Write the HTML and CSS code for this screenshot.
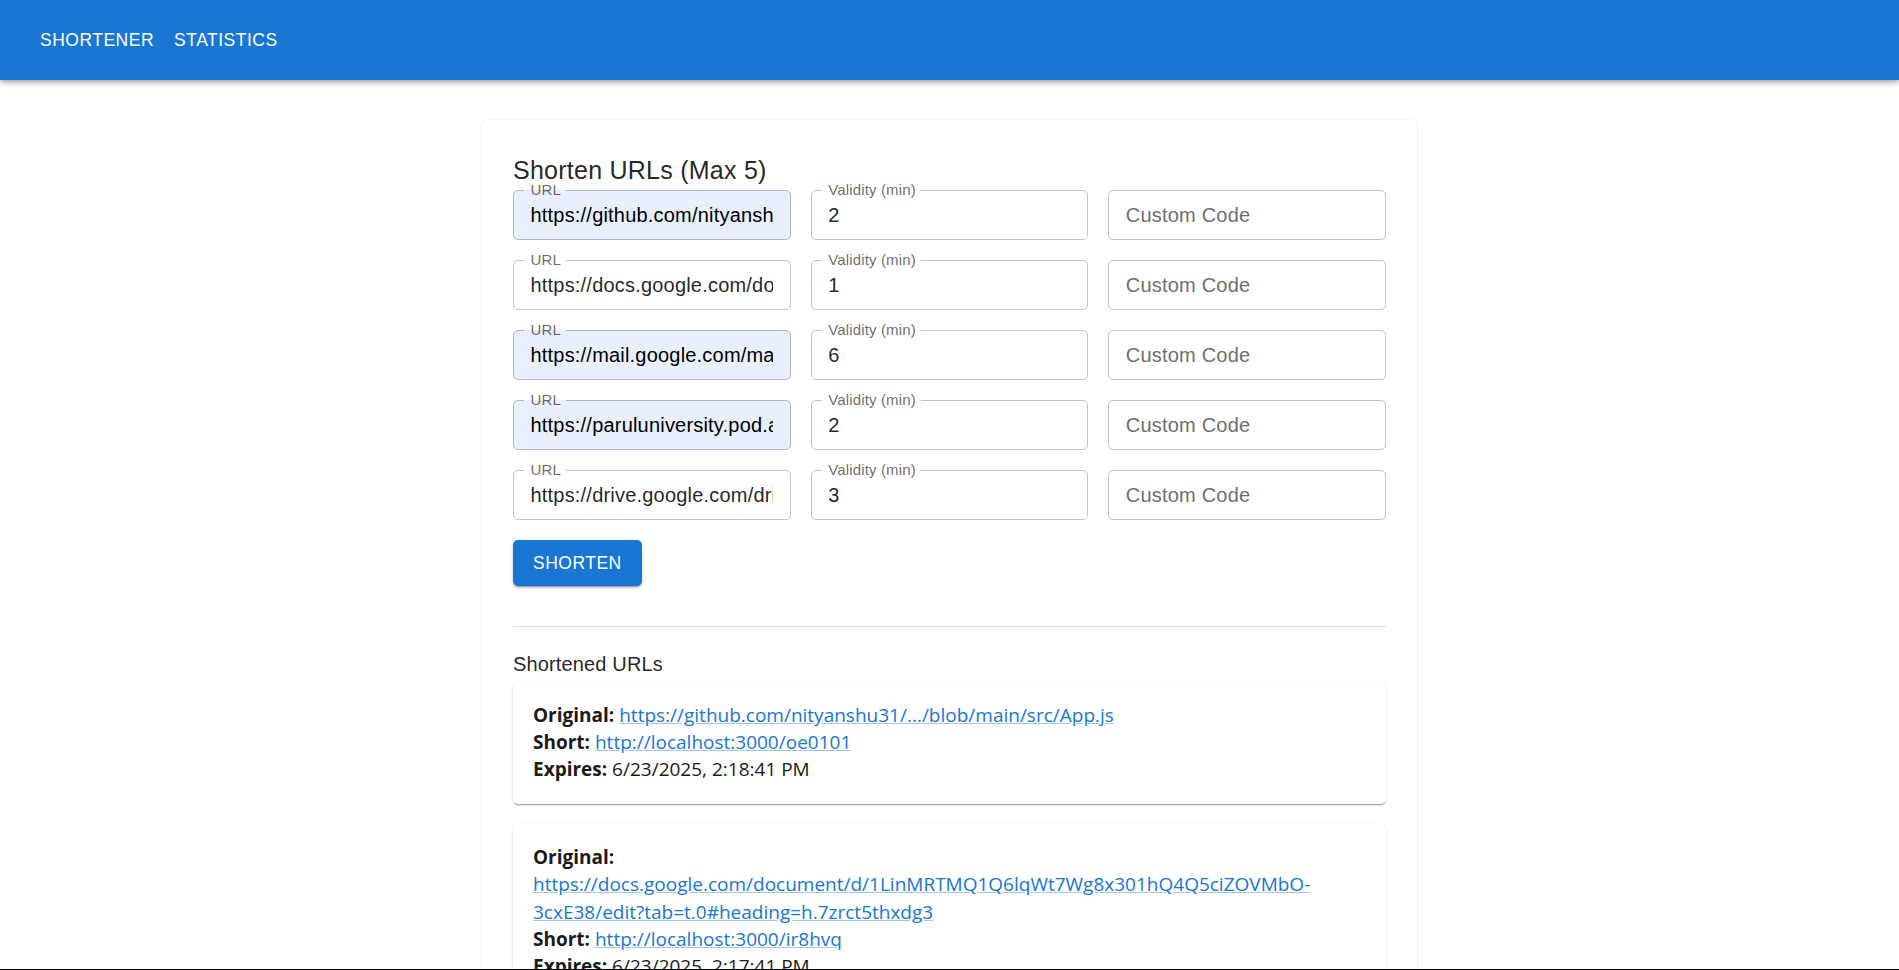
FILE: index.html
```html
<!DOCTYPE html>
<html lang="en">
<head>
<meta charset="utf-8">
<title>URL Shortener</title>
<link rel="stylesheet" href="styles.css">
</head>
<body>
<header class="appbar">
  <nav class="toolbar">
    <a class="nav-btn" href="#">Shortener</a>
    <a class="nav-btn" href="#">Statistics</a>
  </nav>
</header>

<main class="container">
  <section class="paper">
    <h2 class="title">Shorten URLs (Max 5)</h2>

    <div class="form-grid">
      <div class="field is-autofilled">
        <input class="field-input" type="text" value="https://github.com/nityanshu31/url-shortener/blob/main/src/App.js">
        <fieldset class="field-outline"><legend class="field-legend"><span>URL</span></legend></fieldset>
        <label class="field-label">URL</label>
      </div>
      <div class="field">
        <input class="field-input" type="text" value="2">
        <fieldset class="field-outline"><legend class="field-legend"><span>Validity (min)</span></legend></fieldset>
        <label class="field-label">Validity (min)</label>
      </div>
      <div class="field">
        <input class="field-input" type="text" placeholder="Custom Code">
        <fieldset class="field-outline no-label"></fieldset>
      </div>

      <div class="field">
        <input class="field-input" type="text" value="https://docs.google.com/document/d/1LinMRTMQ1Q6lqWt7Wg8x301hQ4Q5ciZOVMbO-3cxE38/edit?tab=t.0#heading=h.7zrct5thxdg3">
        <fieldset class="field-outline"><legend class="field-legend"><span>URL</span></legend></fieldset>
        <label class="field-label">URL</label>
      </div>
      <div class="field">
        <input class="field-input" type="text" value="1">
        <fieldset class="field-outline"><legend class="field-legend"><span>Validity (min)</span></legend></fieldset>
        <label class="field-label">Validity (min)</label>
      </div>
      <div class="field">
        <input class="field-input" type="text" placeholder="Custom Code">
        <fieldset class="field-outline no-label"></fieldset>
      </div>

      <div class="field is-autofilled">
        <input class="field-input" type="text" value="https://mail.google.com/mail/u/0/#inbox">
        <fieldset class="field-outline"><legend class="field-legend"><span>URL</span></legend></fieldset>
        <label class="field-label">URL</label>
      </div>
      <div class="field">
        <input class="field-input" type="text" value="6">
        <fieldset class="field-outline"><legend class="field-legend"><span>Validity (min)</span></legend></fieldset>
        <label class="field-label">Validity (min)</label>
      </div>
      <div class="field">
        <input class="field-input" type="text" placeholder="Custom Code">
        <fieldset class="field-outline no-label"></fieldset>
      </div>

      <div class="field is-autofilled">
        <input class="field-input" type="text" value="https://paruluniversity.pod.ai/">
        <fieldset class="field-outline"><legend class="field-legend"><span>URL</span></legend></fieldset>
        <label class="field-label">URL</label>
      </div>
      <div class="field">
        <input class="field-input" type="text" value="2">
        <fieldset class="field-outline"><legend class="field-legend"><span>Validity (min)</span></legend></fieldset>
        <label class="field-label">Validity (min)</label>
      </div>
      <div class="field">
        <input class="field-input" type="text" placeholder="Custom Code">
        <fieldset class="field-outline no-label"></fieldset>
      </div>

      <div class="field">
        <input class="field-input" type="text" value="https://drive.google.com/drive/my-drive">
        <fieldset class="field-outline"><legend class="field-legend"><span>URL</span></legend></fieldset>
        <label class="field-label">URL</label>
      </div>
      <div class="field">
        <input class="field-input" type="text" value="3">
        <fieldset class="field-outline"><legend class="field-legend"><span>Validity (min)</span></legend></fieldset>
        <label class="field-label">Validity (min)</label>
      </div>
      <div class="field">
        <input class="field-input" type="text" placeholder="Custom Code">
        <fieldset class="field-outline no-label"></fieldset>
      </div>
    </div>

    <button class="btn-primary" type="button">Shorten</button>

    <hr class="divider">

    <h3 class="subtitle">Shortened URLs</h3>

    <div class="result">
      <p class="result-line"><strong>Original:</strong> <a class="link" href="#">https://github.com/nityanshu31/.../blob/main/src/App.js</a></p>
      <p class="result-line"><strong>Short:</strong> <a class="link" href="#">http://localhost:3000/oe0101</a></p>
      <p class="result-line"><strong>Expires:</strong> 6/23/2025, 2:18:41 PM</p>
    </div>

    <div class="result">
      <p class="result-line"><strong>Original:</strong> <a class="link" href="#">https://docs.google.com/document/d/1LinMRTMQ1Q6lqWt7Wg8x301hQ4Q5ciZOVMbO-3cxE38/edit?tab=t.0#heading=h.7zrct5thxdg3</a></p>
      <p class="result-line"><strong>Short:</strong> <a class="link" href="#">http://localhost:3000/ir8hvq</a></p>
      <p class="result-line"><strong>Expires:</strong> 6/23/2025, 2:17:41 PM</p>
    </div>
  </section>
</main>

<div class="screen-edge"></div>
</body>
</html>
```

FILE: styles.css
```css
* {
  box-sizing: border-box;
}

html,
body {
  margin: 0;
  padding: 0;
  background: #ffffff;
}

body {
  font-family: "Liberation Sans", Arial, sans-serif;
  color: rgba(0, 0, 0, 0.87);
}

/* ---------- App bar ---------- */
.appbar {
  background: #1976d2;
  height: 80px;
  box-shadow: 0 2px 4px -1px rgba(0, 0, 0, 0.2),
              0 4px 5px 0 rgba(0, 0, 0, 0.14),
              0 1px 10px 0 rgba(0, 0, 0, 0.12);
  position: relative;
  z-index: 2;
}

.toolbar {
  height: 80px;
  display: flex;
  align-items: center;
  padding: 0 30px;
}

.nav-btn {
  color: #ffffff;
  text-decoration: none;
  text-transform: uppercase;
  font-size: 17.5px;
  line-height: 30.625px;
  letter-spacing: 0.5px;
  padding: 7.5px 10px;
  border-radius: 5px;
}

/* ---------- Main card ---------- */
.container {
  display: flex;
  justify-content: center;
  padding-top: 40px;
}

.paper {
  width: 935px;
  padding: 30px 31px 40px;
  background: #ffffff;
  border-radius: 5px;
  box-shadow: 0 0 0 1px rgba(0, 0, 0, 0.025),
              0 1px 3px rgba(0, 0, 0, 0.06);
}

.title {
  margin: 0;
  font-size: 25px;
  font-weight: 400;
  line-height: 40px;
  letter-spacing: 0.25px;
  color: rgba(0, 0, 0, 0.87);
}

/* ---------- Form grid ---------- */
.form-grid {
  display: grid;
  grid-template-columns: repeat(3, 1fr);
  column-gap: 20px;
  row-gap: 20px;
}

.field {
  position: relative;
  height: 50px;
  border-radius: 5px;
}

.field-input {
  display: block;
  width: 100%;
  height: 50px;
  margin: 0;
  padding: 0 17.5px;
  border: 0;
  outline: 0;
  border-radius: 5px;
  background: transparent;
  font-family: "Liberation Sans", Arial, sans-serif;
  font-size: 20px;
  letter-spacing: 0.2px;
  color: rgba(0, 0, 0, 0.87);
}

.field-input::placeholder {
  color: #6f6f6f;
  opacity: 1;
}

.is-autofilled .field-input {
  background: #e8f0fe;
  color: #000000;
}

.field-outline {
  position: absolute;
  top: -6px;
  left: 0;
  right: 0;
  bottom: 0;
  margin: 0;
  padding: 0 10px;
  border: 1px solid rgba(0, 0, 0, 0.23);
  border-radius: 5px;
  pointer-events: none;
  min-width: 0;
}

.field-outline.no-label {
  top: 0;
}

.field-legend {
  display: block;
  width: auto;
  padding: 0;
  height: 13px;
  font-size: 15px;
  line-height: 13px;
  letter-spacing: 0.15px;
  visibility: hidden;
  white-space: nowrap;
  overflow: hidden;
}

.field-legend span {
  display: inline-block;
  padding: 0 6px;
  opacity: 0;
}

.field-label {
  position: absolute;
  left: 17.5px;
  top: -9px;
  font-size: 15px;
  line-height: 17px;
  letter-spacing: 0.15px;
  color: rgba(0, 0, 0, 0.6);
  white-space: nowrap;
}

/* ---------- Button ---------- */
.btn-primary {
  display: block;
  margin-top: 20px;
  padding: 7.5px 20px;
  border: 0;
  border-radius: 5px;
  background: #1976d2;
  color: #ffffff;
  font-family: "Liberation Sans", Arial, sans-serif;
  font-size: 17.5px;
  line-height: 30.625px;
  letter-spacing: 0.5px;
  text-transform: uppercase;
  box-shadow: 0 3px 1px -2px rgba(0, 0, 0, 0.2),
              0 2px 2px 0 rgba(0, 0, 0, 0.14),
              0 1px 5px 0 rgba(0, 0, 0, 0.12);
  cursor: pointer;
}

.divider {
  margin: 40px 0 20px;
  border: 0;
  border-top: 1px solid rgba(0, 0, 0, 0.12);
  height: 0;
}

.subtitle {
  margin: 0;
  font-size: 20px;
  font-weight: 400;
  line-height: 35px;
  letter-spacing: 0.15px;
  color: rgba(0, 0, 0, 0.87);
}

/* ---------- Results ---------- */
.result {
  padding: 20px;
  margin-bottom: 20px;
  border-radius: 5px;
  background: #ffffff;
  box-shadow: 0 2px 1px -1px rgba(0, 0, 0, 0.2),
              0 1px 1px 0 rgba(0, 0, 0, 0.14),
              0 1px 3px 0 rgba(0, 0, 0, 0.12);
  font-family: "Open Sans", "Noto Sans", sans-serif;
  font-size: 19px;
  color: #1a1a1a;
}

.result-line {
  margin: 0;
  line-height: 27.4px;
}

.result-line strong {
  font-weight: 700;
}

.link {
  color: #1976d2;
  text-decoration: underline;
  text-decoration-color: rgba(25, 118, 210, 0.4);
}

.screen-edge {
  position: fixed;
  left: 0;
  right: 0;
  bottom: 0;
  height: 1px;
  background: #000000;
  z-index: 5;
}
```
